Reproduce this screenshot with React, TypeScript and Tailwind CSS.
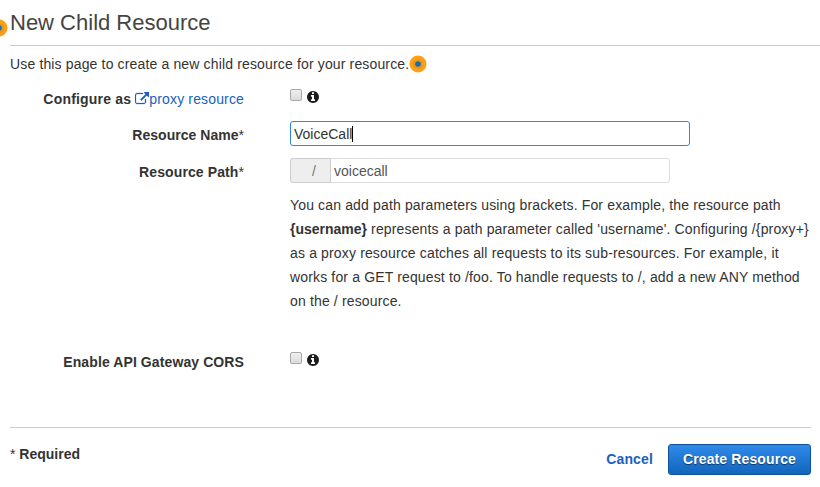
function Pulse({ className }: { className: string }) {
  return (
    <svg viewBox="0 0 18 18" className={`size-[18px] shrink-0 ${className}`}>
      <circle cx="9" cy="9" r="8.5" fill="#ff9f16" />
      <circle cx="9" cy="9" r="5.2" fill="#e8981f" />
      <circle cx="9" cy="9" r="2.8" fill="#146eb4" />
    </svg>
  );
}

function ExternalLink() {
  return (
    <svg viewBox="0 0 1792 1792" fill="currentColor" stroke="currentColor" strokeWidth="30" className="-mt-px size-3.5 shrink-0">
      <path d="M1408 928v320q0 119-84.5 203.5t-203.5 84.5h-832q-119 0-203.5-84.5t-84.5-203.5v-832q0-119 84.5-203.5t203.5-84.5h704q14 0 23 9t9 23v64q0 14-9 23t-23 9h-704q-66 0-113 47t-47 113v832q0 66 47 113t113 47h832q66 0 113-47t47-113v-320q0-14 9-23t23-9h64q14 0 23 9t9 23zm384-864v512q0 26-19 45t-45 19-45-19l-176-176-652 652q-10 10-23 10t-23-10l-114-114q-10-10-10-23t10-23l652-652-176-176q-19-19-19-45t19-45 45-19h512q26 0 45 19t19 45z" />
    </svg>
  );
}

function InfoCircle() {
  return (
    <svg viewBox="128 128 1536 1536" fill="currentColor" className="mt-[2px] ml-[5px] size-3 text-[#1c1c1c]">
      <path d="M1152 1376v-160q0-14-9-23t-23-9h-96v-512q0-14-9-23t-23-9h-320q-14 0-23 9t-9 23v160q0 14 9 23t23 9h96v320h-96q-14 0-23 9t-9 23v160q0 14 9 23t23 9h448q14 0 23-9t9-23zm-128-896v-160q0-14-9-23t-23-9h-192q-14 0-23 9t-9 23v160q0 14 9 23t23 9h192q14 0 23-9t9-23zm640 416q0 209-103 385.5t-279.5 279.5-385.5 103-385.5-103-279.5-279.5-103-385.5 103-385.5 279.5-279.5 385.5-103 385.5 103 279.5 279.5 103 385.5z" />
    </svg>
  );
}

function CheckOption() {
  return (
    <div className="flex items-start">
      <span className="size-3 rounded-[2px] border border-[#a9a9a9] bg-linear-to-b from-[#eeeeee] to-[#dcdcdc]" />
      <InfoCircle />
    </div>
  );
}

export default function App() {
  return (
    <div className="relative h-[487px] w-[820px] overflow-hidden bg-white pl-2.5 font-['Liberation_Sans',Arial,sans-serif] text-sm leading-6 tracking-[0.15px] text-[#333]">
      <Pulse className="absolute top-[19px] -left-[10px]" />
      <h1 className="h-[46px] border-b border-[#ccc] pt-2 text-[22px] leading-[29px] tracking-normal text-[#444]">New Child Resource</h1>
      <div className="flex h-[36px] items-center">
        <p>Use this page to create a new child resource for your resource.</p>
        <Pulse className="mb-px" />
      </div>
      <div className="flex h-[39px] pt-[5px]">
        <div className="flex w-[234px] items-center justify-end self-start">
          <b className="mr-1 tracking-[0.2px]">Configure as</b>
          <a className="flex items-center text-[#1a5fbf]"><ExternalLink />proxy resource</a>
        </div>
        <div className="ml-[46px] pt-[2px]"><CheckOption /></div>
      </div>
      <div className="flex h-[37px]">
        <div className="w-[234px] pt-[2px] text-right tracking-[0.03px]"><b>Resource Name</b>*</div>
        <div className="ml-[46px] flex h-[25px] w-[400px] items-center rounded-[3px] border border-[#2e86de] pl-[3px] tracking-normal">
          VoiceCall<span className="h-4 w-px bg-black" />
        </div>
      </div>
      <div className="flex h-[35px]">
        <div className="w-[234px] pt-[2px] text-right tracking-[0.1px]"><b>Resource Path</b>*</div>
        <div className="ml-[46px] flex h-[25px] w-[380px] items-center rounded-[3px] border border-[#ddd] tracking-normal text-[#555]">
          <span className="-ml-px flex h-[25px] w-[41px] items-center rounded-l-[3px] border border-[#ccc] bg-[#eee] pl-[21px] text-[#777]">/</span>
          <span className="pl-[3px]">voicecall</span>
        </div>
      </div>
      <p className="ml-[280px] h-[159px] whitespace-nowrap">
        You can add path parameters using brackets. For example, the resource path<br />
        <b className="tracking-normal">{"{username}"}</b> represents a path parameter called 'username'. Configuring /{"{proxy+}"}<br />
        as a proxy resource catches all requests to its sub-resources. For example, it<br />
        works for a GET request to /foo. To handle requests to /, add a new ANY method<br />
        on the / resource.
      </p>
      <div className="flex h-[75px]">
        <b className="-mt-[2px] w-[234px] text-right tracking-[0.1px]">Enable API Gateway CORS</b>
        <div className="ml-[46px]"><CheckOption /></div>
      </div>
      <footer className="flex w-[801px] justify-between border-t border-[#ccc] pt-4">
        <div className="-mt-[2px] tracking-normal">* <b>Required</b></div>
        <div className="flex items-center font-bold">
          <a className="mr-[15px] -mt-[2px] text-[#1a5fbf]">Cancel</a>
          <button className="h-[31px] w-[143px] rounded-[3px] border border-[#0f5299] bg-linear-to-b from-[#2f8aeb] to-[#1166bb] pb-[2px] tracking-[0.12px] text-white text-shadow-[0_1px_1px_#0008]">Create Resource</button>
        </div>
      </footer>
    </div>
  );
}
